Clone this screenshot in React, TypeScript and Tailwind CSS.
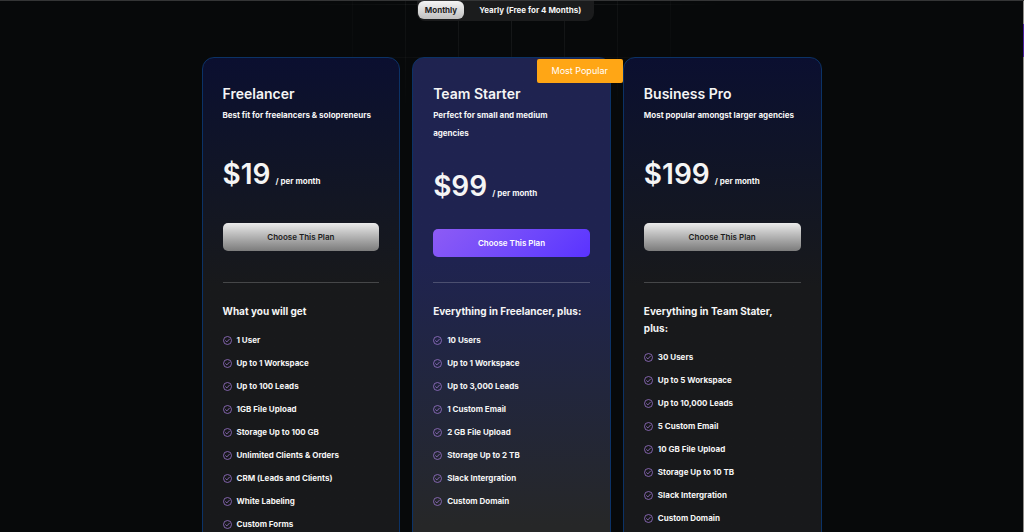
import clsx from "clsx"

const plans = [
  {
    name: "Freelancer",
    description: "Best fit for freelancers & solopreneurs",
    price: "$19",
    heading: "What you will get",
    features: [
      "1 User",
      "Up to 1 Workspace",
      "Up to 100 Leads",
      "1GB File Upload",
      "Storage Up to 100 GB",
      "Unlimited Clients & Orders",
      "CRM (Leads and Clients)",
      "White Labeling",
      "Custom Forms",
    ],
    popular: false,
  },
  {
    name: "Team Starter",
    description: "Perfect for small and medium\nagencies",
    price: "$99",
    heading: "Everything in Freelancer, plus:",
    features: [
      "10 Users",
      "Up to 1 Workspace",
      "Up to 3,000 Leads",
      "1 Custom Email",
      "2 GB File Upload",
      "Storage Up to 2 TB",
      "Slack Intergration",
      "Custom Domain",
    ],
    popular: true,
  },
  {
    name: "Business Pro",
    description: "Most popular amongst larger agencies",
    price: "$199",
    heading: "Everything in Team Stater,\nplus:",
    features: [
      "30 Users",
      "Up to 5 Workspace",
      "Up to 10,000 Leads",
      "5 Custom Email",
      "10 GB File Upload",
      "Storage Up to 10 TB",
      "Slack Intergration",
      "Custom Domain",
    ],
    popular: false,
  },
]

function CheckIcon() {
  return (
    <svg viewBox="0 0 18 18" className="size-[9px] shrink-0" fill="none" stroke="#9470c4" strokeWidth="1.7" aria-hidden="true">
      <circle cx="9" cy="9" r="8" />
      <path d="M5.2 9.4 7.8 11.8 12.8 6.4" strokeLinecap="round" strokeLinejoin="round" />
    </svg>
  )
}

function PlanCard({ plan }: { plan: (typeof plans)[number] }) {
  return (
    <article
      className={clsx(
        "relative rounded-xl border border-[#0b3266] px-5 pt-6 pb-8",
        plan.popular
          ? "z-10 bg-linear-to-b from-[#1f2350] from-40% to-[#262728] to-92%"
          : "bg-linear-to-b from-[#0b0f30] to-[#18191b] to-45%"
      )}
    >
      {plan.popular && (
        <span className="absolute top-px -right-[13px] rounded-xs bg-[#ffa615] px-[15px] text-[9px] leading-6 text-white">
          Most Popular
        </span>
      )}
      <div className="flex h-[201px] flex-col justify-between border-b border-white/20">
        <div>
          <h2 className="text-[14px] leading-6 font-semibold">{plan.name}</h2>
          <p className="text-[8px] leading-[18px] font-bold whitespace-pre-line">{plan.description}</p>
        </div>
        <p className="flex items-baseline gap-[5px]">
          <span className="text-[28px] leading-[38px] font-semibold">{plan.price}</span>
          <span className="text-[8px] leading-none font-bold">/ per month</span>
        </p>
        <button
          type="button"
          className={clsx(
            "h-7 rounded-[5px] text-[8px] font-semibold",
            plan.popular
              ? "bg-linear-135 from-[#8d5bf5] to-[#5a32ff] text-white"
              : "bg-linear-to-b from-[#ebebeb] to-[#7c7c7c] text-[#1c1c1c]"
          )}
        >
          Choose This Plan
        </button>
        <div className="h-0" />
      </div>
      <h3 className="mt-5 text-[10px] leading-[17px] font-bold whitespace-pre-line">{plan.heading}</h3>
      <ul className="mt-3 flex flex-col gap-[6px]">
        {plan.features.map((feature) => (
          <li key={feature} className="flex items-center gap-[5px] text-[8px] leading-[17px] font-bold">
            <CheckIcon />
            {feature}
          </li>
        ))}
      </ul>
    </article>
  )
}

export default function App() {
  return (
    <div className="relative h-screen overflow-hidden border-t border-[#343536] bg-[#07090a] pr-px font-['Inter',sans-serif] text-[#f5f5f5]">
      {/* faint grid behind the toggle */}
      <div className="absolute inset-x-0 top-0 h-28 bg-[linear-gradient(to_right,#ffffff14_1px,transparent_1px),linear-gradient(to_bottom,#ffffff14_1px,transparent_1px)] bg-size-[53px_53px] bg-position-[34px_3px] mask-radial-from-0% mask-radial-to-100% mask-radial-[220px_130px] mask-radial-at-top" />
      {/* scroll track */}
      <div className="absolute inset-y-0 right-0 w-px bg-[#8f8d8a]">
        <div className="mt-[23px] h-[33px] bg-[#4a1fa0]" />
      </div>

      <div className="relative mx-auto max-w-[620px]">
        <div className="flex justify-center pr-3">
          <div className="flex h-5 items-start rounded-b-lg bg-[#1b1c1d] px-px">
            <button type="button" className="h-[18px] rounded-md bg-linear-to-b from-[#f4f4f4] to-[#c0c0c0] px-[7px] text-[8px] font-bold text-[#1c1c1c]">
              Monthly
            </button>
            <button type="button" className="h-[18px] pr-3 pl-[15px] text-[8px] font-bold">
              Yearly (Free for 4 Months)
            </button>
          </div>
        </div>
        <div className="mt-9 grid grid-cols-3 gap-3">
          {plans.map((plan) => (
            <PlanCard key={plan.name} plan={plan} />
          ))}
        </div>
      </div>
    </div>
  )
}
